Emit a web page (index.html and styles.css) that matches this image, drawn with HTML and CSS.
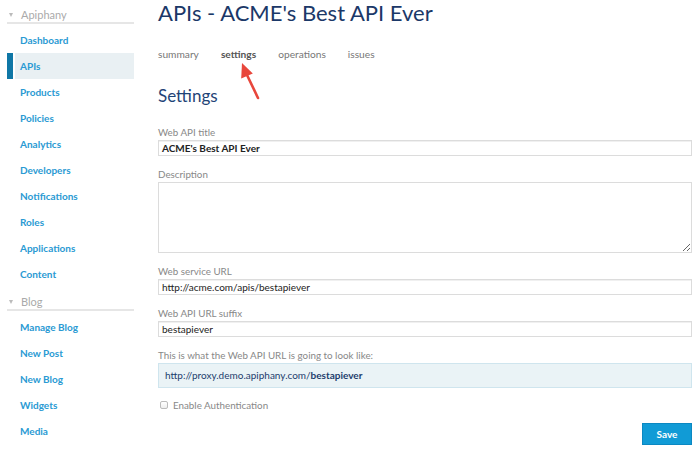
FILE: index.html
```html
<!DOCTYPE html>
<html>
<head>
<meta charset="utf-8">
<link rel="stylesheet" href="styles.css">
</head>
<body>
<div class="page">
  <aside class="sidebar">
    <div class="group-head"><span class="tri"></span>Apiphany</div>
    <nav class="nav">
      <a class="nav-item">Dashboard</a>
      <a class="nav-item active">APIs</a>
      <a class="nav-item">Products</a>
      <a class="nav-item">Policies</a>
      <a class="nav-item">Analytics</a>
      <a class="nav-item">Developers</a>
      <a class="nav-item">Notifications</a>
      <a class="nav-item">Roles</a>
      <a class="nav-item">Applications</a>
      <a class="nav-item">Content</a>
    </nav>
    <div class="group-head"><span class="tri"></span>Blog</div>
    <nav class="nav">
      <a class="nav-item">Manage Blog</a>
      <a class="nav-item">New Post</a>
      <a class="nav-item">New Blog</a>
      <a class="nav-item">Widgets</a>
      <a class="nav-item">Media</a>
    </nav>
  </aside>
  <main class="main">
    <h1 class="title">APIs - ACME's Best API Ever</h1>
    <div class="tabs">
      <span class="tab">summary</span>
      <span class="tab current">settings</span>
      <span class="tab">operations</span>
      <span class="tab">issues</span>
    </div>
    <svg class="arrow" width="30" height="50" viewBox="230 55 30 50">
      <line x1="258" y1="98" x2="247" y2="75" stroke="#e8473c" stroke-width="2.6" stroke-linecap="round"/>
      <polygon points="242,63 252.8,73.6 241.2,78.4" fill="#e8473c"/>
    </svg>
    <h2 class="section">Settings</h2>
    <div class="field">
      <label class="label">Web API title</label>
      <div class="input strong">ACME's Best API Ever</div>
    </div>
    <div class="field">
      <label class="label">Description</label>
      <textarea class="textarea"></textarea>
    </div>
    <div class="field">
      <label class="label">Web service URL</label>
      <div class="input">http://acme.com/apis/bestapiever</div>
    </div>
    <div class="field">
      <label class="label">Web API URL suffix</label>
      <div class="input">bestapiever</div>
    </div>
    <div class="field">
      <label class="label">This is what the Web API URL is going to look like:</label>
      <div class="preview">http://proxy.demo.apiphany.com/<b>bestapiever</b></div>
    </div>
    <div class="check-row"><span class="checkbox"></span>Enable Authentication</div>
    <div class="actions"><button class="save">Save</button></div>
  </main>
</div>
</body>
</html>
```
FILE: styles.css
```css
* { box-sizing: border-box; }
html, body { margin: 0; padding: 0; background: #fff; }
body { font-family: Lato, "Open Sans", sans-serif; font-size: 10px; color: #333; }
.page { display: flex; width: 700px; height: 451px; overflow: hidden; }
.sidebar { width: 127px; margin-left: 7px; flex: none; }
.group-head {
  padding-top: 8px; line-height: 14px; height: 24px;
  border-bottom: 2px solid #e6e6e6; margin-bottom: 3px;
  color: #aaa; font-size: 11px; display: flex; align-items: center; align-content: flex-start;
  flex-wrap: wrap;
}
.tri {
  width: 0; height: 0; margin-left: 2px; margin-right: 8px;
  border-left: 2.5px solid transparent; border-right: 2.5px solid transparent;
  border-top: 4px solid #bbb;
}
.nav { display: flex; flex-direction: column; }
.nav-item {
  height: 26px; line-height: 27px; margin-left: 8px; padding-left: 5px;
  color: #2a9ad3; font-weight: 700; font-size: 10px;
}
.nav-item.active { background: #e9f0f3; box-shadow: -2px 0 0 #fff, -8px 0 0 #0f77a6; }
.main { margin-left: 24px; width: 534px; flex: none; position: relative; }
.title { margin: 0; font-weight: 400; font-size: 22px; line-height: 26px; color: #1b3868; }
.tabs { display: flex; gap: 22px; margin-top: 21px; height: 14px; line-height: 14px; color: #777; font-size: 10.2px; }
.tab.current { font-weight: 700; color: #555; }
.arrow { position: absolute; left: 72px; top: 55px; }
.section { margin: 25px 0 0; font-weight: 400; font-size: 17px; line-height: 20px; color: #1f4477; }
.field { display: flex; flex-direction: column; margin-top: 11px; }
.section + .field { margin-top: 19px; }
.label { line-height: 14px; color: #888; margin-bottom: 1px; font-size: 9.8px; }
.input {
  height: 16px; line-height: 14px; border: 1px solid #dcdcdc; padding: 0 3px;
  color: #222; box-shadow: inset 0 1px 0 #f0f0f0;
}
.input.strong { font-weight: 700; }
.textarea {
  height: 71px; border: 1px solid #dcdcdc; resize: vertical; margin: 0;
  font-family: inherit; display: block;
}
.preview {
  height: 25px; line-height: 23px; padding: 0 6px;
  background: #eaf3f6; border: 1px solid #cfe5ee; color: #1d3d6d;
}
.check-row { display: flex; align-items: center; gap: 5px; margin-top: 10px; height: 14px; color: #888; padding-left: 2px; font-size: 9.8px; }
.checkbox { width: 8px; height: 8px; border: 1px solid #bbb; border-radius: 2px; background: linear-gradient(#fff, #eee); }
.actions { display: flex; justify-content: flex-end; margin-top: 11px; }
.save {
  width: 50px; height: 22px; border: 1px solid #0b88c2; background: #119bd6;
  color: #fff; font-family: inherit; font-weight: 700; font-size: 10px; padding: 0;
}
```
